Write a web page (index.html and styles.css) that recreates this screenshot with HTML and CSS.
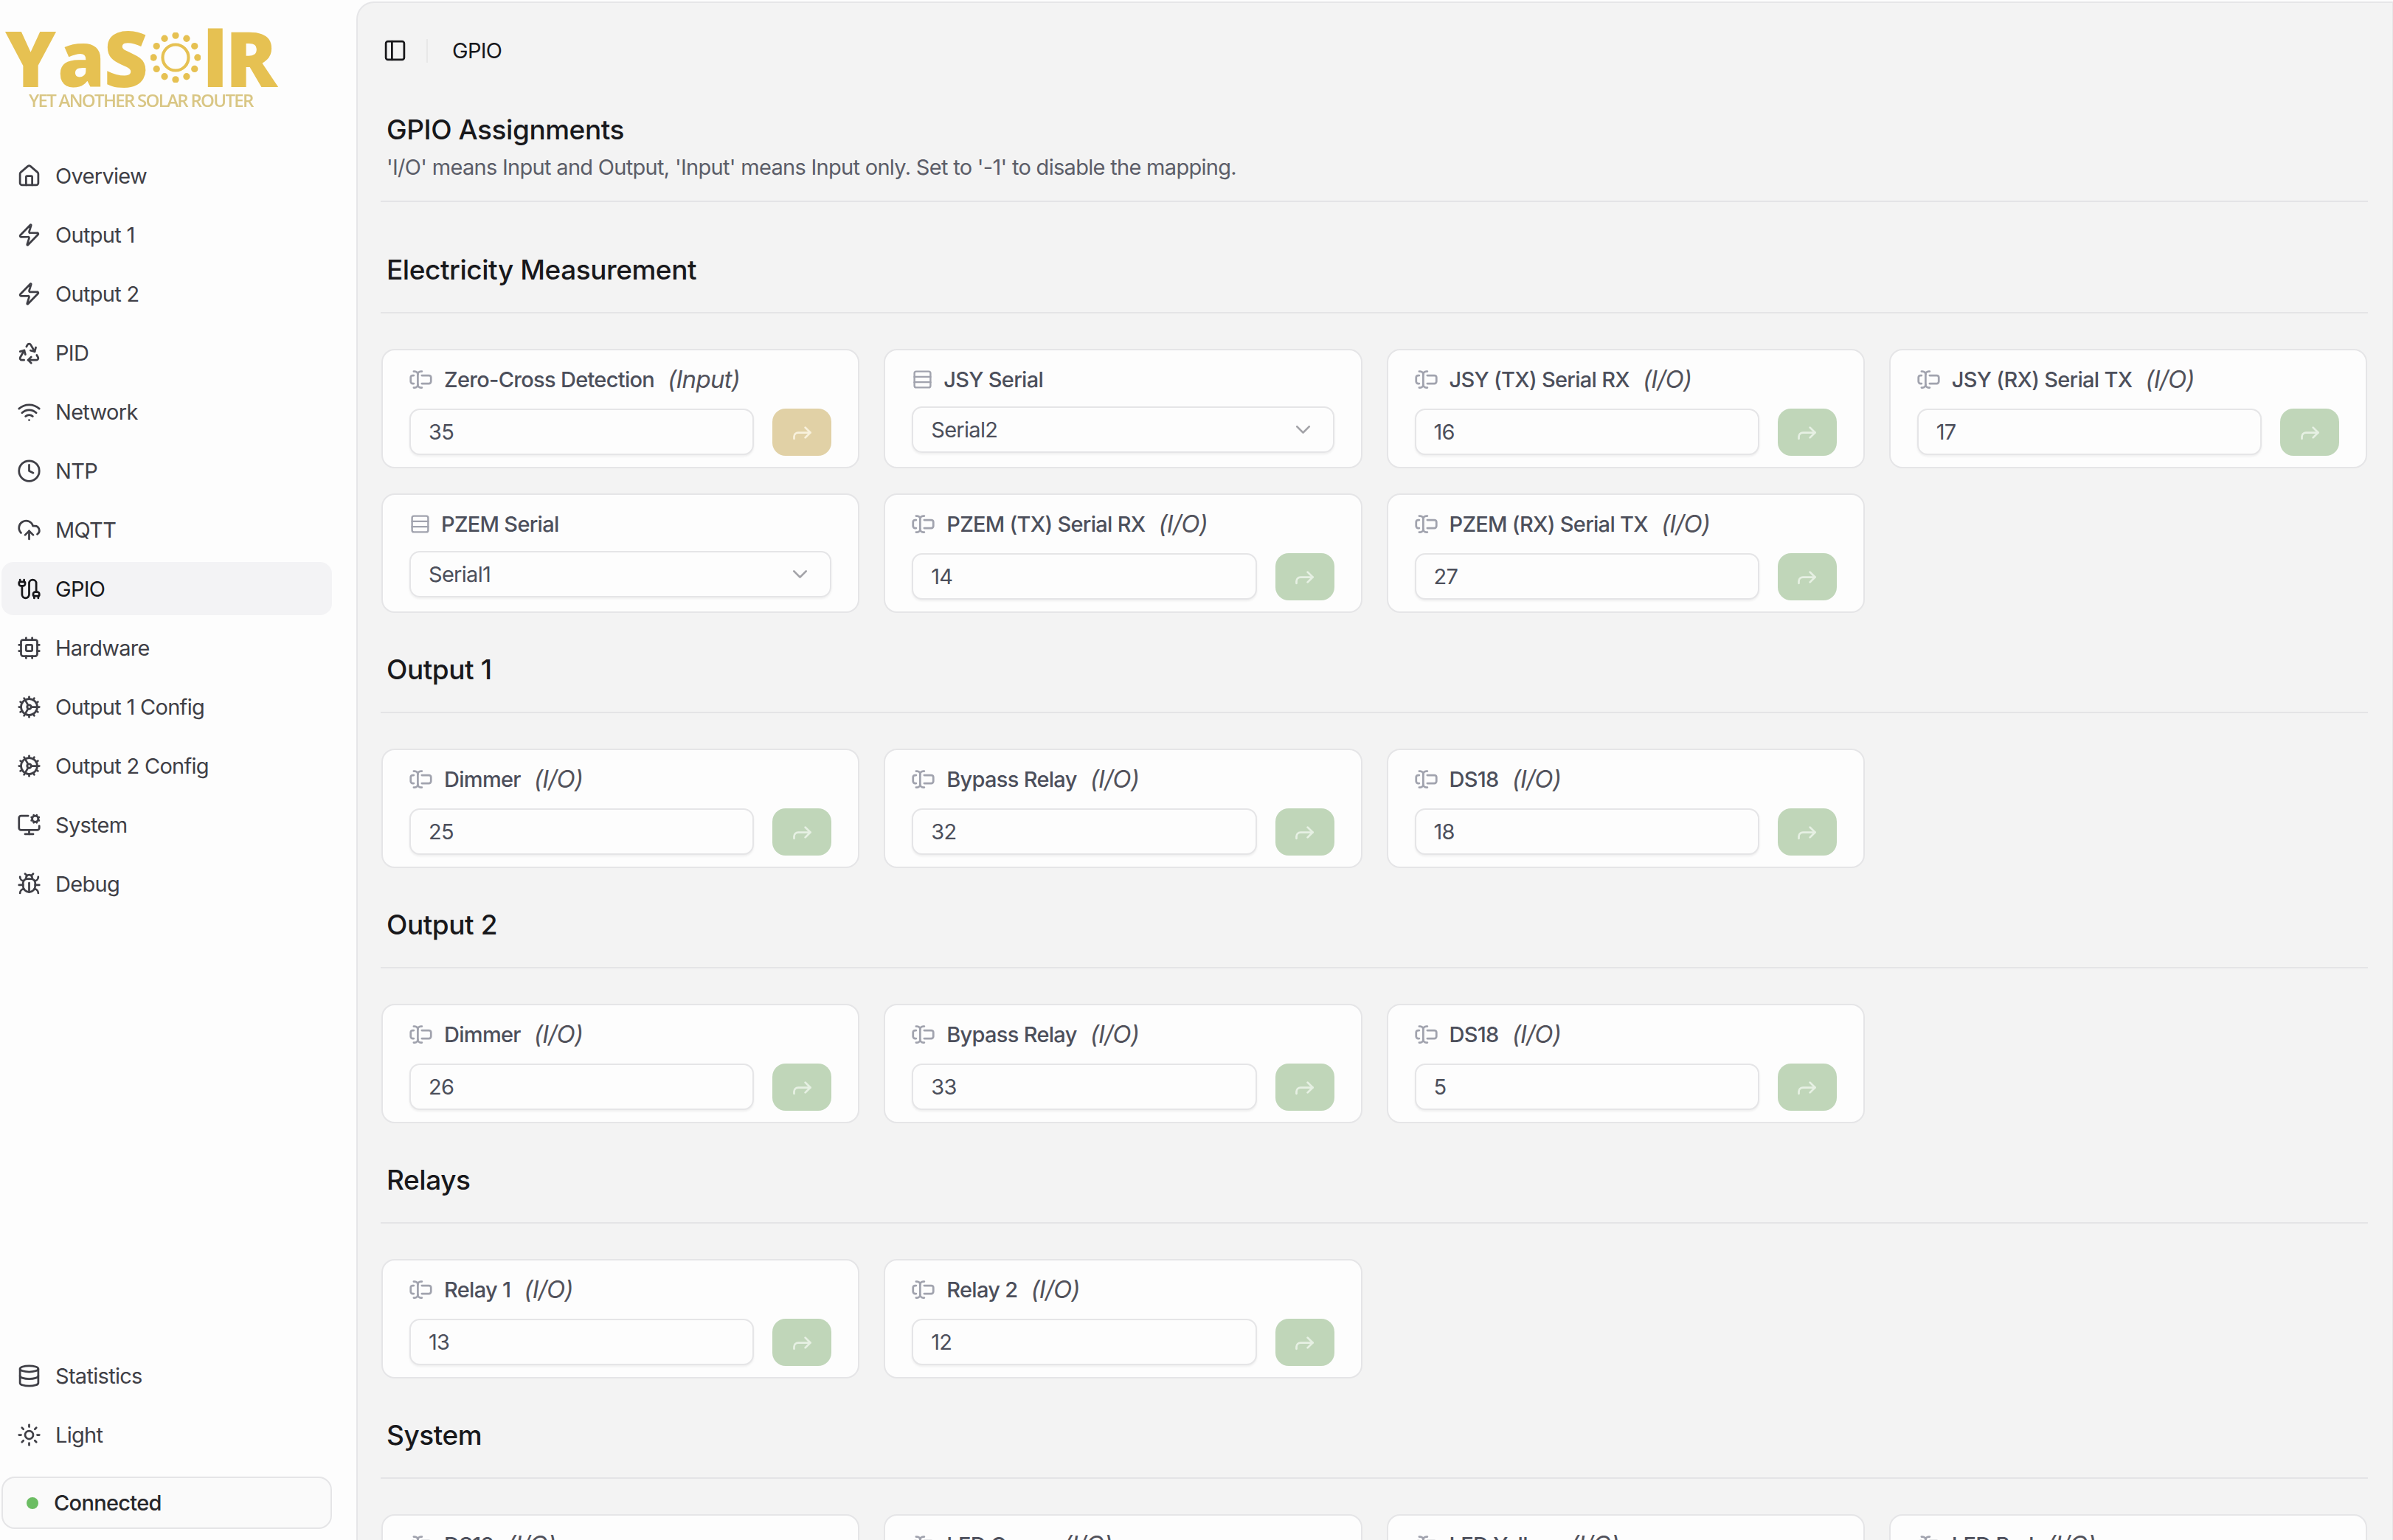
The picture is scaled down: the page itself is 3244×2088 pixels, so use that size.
FILE: index.html
```html
<!DOCTYPE html>
<html lang="en">
<head>
    <meta charset="UTF-8">
    <meta name="viewport" content="width=device-width, initial-scale=1.0">
    <title>YaSolR - GPIO</title>
    <link rel="stylesheet" href="styles.css">
</head>
<body>
    <!-- Icon sprite -->
    <svg class="sprite" xmlns="http://www.w3.org/2000/svg">
        <symbol id="i-house" viewBox="0 0 24 24"><path d="M15 21v-8a1 1 0 0 0-1-1h-4a1 1 0 0 0-1 1v8"/><path d="M3 10a2 2 0 0 1 .709-1.528l7-5.999a2 2 0 0 1 2.582 0l7 5.999A2 2 0 0 1 21 10v9a2 2 0 0 1-2 2H5a2 2 0 0 1-2-2z"/></symbol>
        <symbol id="i-zap" viewBox="0 0 24 24"><path d="M4 14a1 1 0 0 1-.78-1.63l9.9-10.2a.5.5 0 0 1 .86.46l-1.92 6.02A1 1 0 0 0 13 10h7a1 1 0 0 1 .78 1.63l-9.9 10.2a.5.5 0 0 1-.86-.46l1.92-6.02A1 1 0 0 0 11 14z"/></symbol>
        <symbol id="i-recycle" viewBox="0 0 24 24"><path d="M7 19H4.815a1.83 1.83 0 0 1-1.57-.881 1.785 1.785 0 0 1-.004-1.784L7.196 9.5"/><path d="M11 19h8.203a1.83 1.83 0 0 0 1.556-.89 1.784 1.784 0 0 0 0-1.775l-1.226-2.12"/><path d="m14 16-3 3 3 3"/><path d="M8.293 13.596 7.196 9.5 3.1 10.598"/><path d="m9.344 5.811 1.093-1.892A1.83 1.83 0 0 1 11.985 3a1.784 1.784 0 0 1 1.546.888l3.943 6.843"/><path d="m13.378 9.633 4.096 1.098 1.097-4.096"/></symbol>
        <symbol id="i-wifi" viewBox="0 0 24 24"><path d="M12 20h.01"/><path d="M2 8.82a15 15 0 0 1 20 0"/><path d="M5 12.859a10 10 0 0 1 14 0"/><path d="M8.5 16.429a5 5 0 0 1 7 0"/></symbol>
        <symbol id="i-clock" viewBox="0 0 24 24"><circle cx="12" cy="12" r="10"/><path d="M12 6v6l4 2"/></symbol>
        <symbol id="i-cloud" viewBox="0 0 24 24"><path d="M12 13v8"/><path d="M4 14.899A7 7 0 1 1 15.71 8h1.79a4.5 4.5 0 0 1 2.5 8.242"/><path d="m8 17 4-4 4 4"/></symbol>
        <symbol id="i-cable" viewBox="0 0 24 24"><path d="M17 21v-2a1 1 0 0 1-1-1v-1a2 2 0 0 1 2-2h2a2 2 0 0 1 2 2v1a1 1 0 0 1-1 1"/><path d="M19 15V6.5a3.5 3.5 0 0 0-7 0v11a3.5 3.5 0 0 1-7 0V9"/><path d="M21 21v-2h-4"/><path d="M3 5h4V3"/><path d="M7 5a1 1 0 0 1 1 1v1a2 2 0 0 1-2 2H4a2 2 0 0 1-2-2V6a1 1 0 0 1 1-1V3"/></symbol>
        <symbol id="i-cpu" viewBox="0 0 24 24"><rect width="16" height="16" x="4" y="4" rx="2"/><rect width="6" height="6" x="9" y="9" rx="1"/><path d="M15 2v2"/><path d="M15 20v2"/><path d="M2 15h2"/><path d="M2 9h2"/><path d="M20 15h2"/><path d="M20 9h2"/><path d="M9 2v2"/><path d="M9 20v2"/></symbol>
        <symbol id="i-cog" viewBox="0 0 24 24"><path d="M12 20a8 8 0 1 0 0-16 8 8 0 0 0 0 16Z"/><path d="M12 14a2 2 0 1 0 0-4 2 2 0 0 0 0 4Z"/><path d="M12 2v2"/><path d="M12 22v-2"/><path d="m17 20.66-1-1.73"/><path d="M11 10.27 7 3.34"/><path d="m20.66 17-1.73-1"/><path d="m3.34 7 1.73 1"/><path d="M14 12h8"/><path d="M2 12h2"/><path d="m20.66 7-1.73 1"/><path d="m3.34 17 1.73-1"/><path d="m17 3.34-1 1.73"/><path d="m11 13.73-4 6.93"/></symbol>
        <symbol id="i-monitor" viewBox="0 0 24 24"><path d="M12 17v4"/><path d="m14.305 7.53.923-.382"/><path d="m15.228 4.852-.923-.383"/><path d="m16.852 3.228-.383-.924"/><path d="m16.852 8.772-.383.923"/><path d="m19.148 3.228.383-.924"/><path d="m19.53 9.696-.382-.924"/><path d="m20.772 4.852.924-.383"/><path d="m20.772 7.148.924.383"/><path d="M22 13v2a2 2 0 0 1-2 2H4a2 2 0 0 1-2-2V5a2 2 0 0 1 2-2h7"/><path d="M8 21h8"/><circle cx="18" cy="6" r="3"/></symbol>
        <symbol id="i-bug" viewBox="0 0 24 24"><path d="m8 2 1.88 1.88"/><path d="M14.12 3.88 16 2"/><path d="M9 7.13v-1a3.003 3.003 0 1 1 6 0v1"/><path d="M12 20c-3.3 0-6-2.7-6-6v-3a4 4 0 0 1 4-4h4a4 4 0 0 1 4 4v3c0 3.3-2.7 6-6 6"/><path d="M12 20v-9"/><path d="M6.53 9C4.6 8.8 3 7.1 3 5"/><path d="M6 13H2"/><path d="M3 21c0-2.1 1.7-3.9 3.8-4"/><path d="M20.97 5c0 2.1-1.6 3.8-3.5 4"/><path d="M22 13h-4"/><path d="M17.2 17c2.1.1 3.8 1.9 3.8 4"/></symbol>
        <symbol id="i-database" viewBox="0 0 24 24"><ellipse cx="12" cy="5" rx="9" ry="3"/><path d="M3 5V19A9 3 0 0 0 21 19V5"/><path d="M3 12A9 3 0 0 0 21 12"/></symbol>
        <symbol id="i-sun" viewBox="0 0 24 24"><circle cx="12" cy="12" r="4"/><path d="M12 2v2"/><path d="M12 20v2"/><path d="m4.93 4.93 1.41 1.41"/><path d="m17.66 17.66 1.41 1.41"/><path d="M2 12h2"/><path d="M20 12h2"/><path d="m6.34 17.66-1.41 1.41"/><path d="m19.07 4.93-1.41 1.41"/></symbol>
        <symbol id="i-panel" viewBox="0 0 24 24"><rect width="18" height="18" x="3" y="3" rx="2"/><path d="M9 3v18"/></symbol>
        <symbol id="i-cursor" viewBox="0 0 24 24"><path d="M5 4h1a3 3 0 0 1 3 3 3 3 0 0 1 3-3h1"/><path d="M13 20h-1a3 3 0 0 1-3-3 3 3 0 0 1-3 3H5"/><path d="M5 16H4a2 2 0 0 1-2-2v-4a2 2 0 0 1 2-2h1"/><path d="M13 8h7a2 2 0 0 1 2 2v4a2 2 0 0 1-2 2h-7"/><path d="M9 7v10"/></symbol>
        <symbol id="i-rows" viewBox="0 0 24 24"><rect width="18" height="18" x="3" y="3" rx="2"/><path d="M21 9H3"/><path d="M21 15H3"/></symbol>
        <symbol id="i-forward" viewBox="0 0 24 24"><path d="m15 17 5-5-5-5"/><path d="M4 18v-2a4 4 0 0 1 4-4h12"/></symbol>
        <symbol id="i-chevron" viewBox="0 0 24 24"><path d="m6 9 6 6 6-6"/></symbol>
    </svg>

    <aside class="sidebar">
        <div class="logo">
            <div class="logo-word">
                <span class="logo-y">Y</span><span class="logo-as">aS</span>
                <svg class="logo-sun" viewBox="0 0 66 66">
                    <circle cx="33" cy="33" r="17" />
                    <g class="logo-rays">
                        <circle cx="33" cy="4" r="4.5"/><circle cx="47.5" cy="8" r="4.5"/><circle cx="58" cy="18" r="4.5"/><circle cx="62" cy="33" r="4.5"/><circle cx="58" cy="48" r="4.5"/><circle cx="47.5" cy="58" r="4.5"/><circle cx="33" cy="62" r="4.5"/><circle cx="18.5" cy="58" r="4.5"/><circle cx="8" cy="48" r="4.5"/><circle cx="4" cy="33" r="4.5"/><circle cx="8" cy="18" r="4.5"/><circle cx="18.5" cy="8" r="4.5"/>
                    </g>
                </svg>
                <span class="logo-lr">lR</span>
            </div>
            <div class="logo-tag">YET ANOTHER SOLAR ROUTER</div>
        </div>

        <nav class="nav">
            <a class="nav-item"><svg class="icon"><use href="#i-house"/></svg>Overview</a>
            <a class="nav-item"><svg class="icon"><use href="#i-zap"/></svg>Output 1</a>
            <a class="nav-item"><svg class="icon"><use href="#i-zap"/></svg>Output 2</a>
            <a class="nav-item"><svg class="icon"><use href="#i-recycle"/></svg>PID</a>
            <a class="nav-item"><svg class="icon"><use href="#i-wifi"/></svg>Network</a>
            <a class="nav-item"><svg class="icon"><use href="#i-clock"/></svg>NTP</a>
            <a class="nav-item"><svg class="icon"><use href="#i-cloud"/></svg>MQTT</a>
            <a class="nav-item active"><svg class="icon"><use href="#i-cable"/></svg>GPIO</a>
            <a class="nav-item"><svg class="icon"><use href="#i-cpu"/></svg>Hardware</a>
            <a class="nav-item"><svg class="icon"><use href="#i-cog"/></svg>Output 1 Config</a>
            <a class="nav-item"><svg class="icon"><use href="#i-cog"/></svg>Output 2 Config</a>
            <a class="nav-item"><svg class="icon"><use href="#i-monitor"/></svg>System</a>
            <a class="nav-item"><svg class="icon"><use href="#i-bug"/></svg>Debug</a>
        </nav>

        <nav class="nav nav-bottom">
            <a class="nav-item"><svg class="icon"><use href="#i-database"/></svg>Statistics</a>
            <a class="nav-item"><svg class="icon"><use href="#i-sun"/></svg>Light</a>
        </nav>

        <div class="status"><span class="status-dot"></span>Connected</div>
    </aside>

    <main class="main">
        <header class="topbar">
            <svg class="icon"><use href="#i-panel"/></svg>
            <span class="topbar-sep"></span>
            <span class="topbar-title">GPIO</span>
        </header>

        <div class="intro">
            <h1>GPIO Assignments</h1>
            <p>'I/O' means Input and Output, 'Input' means Input only. Set to '-1' to disable the mapping.</p>
        </div>

        <section class="section">
            <h2>Electricity Measurement</h2>
            <div class="grid">
                <div class="card">
                    <div class="card-label"><svg class="card-icon"><use href="#i-cursor"/></svg>Zero-Cross Detection<em>(Input)</em></div>
                    <div class="field"><input class="input" value="35"><button class="send send-input"><svg class="icon"><use href="#i-forward"/></svg></button></div>
                </div>
                <div class="card">
                    <div class="card-label card-label-select"><svg class="card-icon-rows"><use href="#i-rows"/></svg>JSY Serial</div>
                    <div class="select">Serial2<svg class="icon chevron"><use href="#i-chevron"/></svg></div>
                </div>
                <div class="card">
                    <div class="card-label"><svg class="card-icon"><use href="#i-cursor"/></svg>JSY (TX) Serial RX<em>(I/O)</em></div>
                    <div class="field"><input class="input" value="16"><button class="send"><svg class="icon"><use href="#i-forward"/></svg></button></div>
                </div>
                <div class="card">
                    <div class="card-label"><svg class="card-icon"><use href="#i-cursor"/></svg>JSY (RX) Serial TX<em>(I/O)</em></div>
                    <div class="field"><input class="input" value="17"><button class="send"><svg class="icon"><use href="#i-forward"/></svg></button></div>
                </div>
                <div class="card">
                    <div class="card-label card-label-select"><svg class="card-icon-rows"><use href="#i-rows"/></svg>PZEM Serial</div>
                    <div class="select">Serial1<svg class="icon chevron"><use href="#i-chevron"/></svg></div>
                </div>
                <div class="card">
                    <div class="card-label"><svg class="card-icon"><use href="#i-cursor"/></svg>PZEM (TX) Serial RX<em>(I/O)</em></div>
                    <div class="field"><input class="input" value="14"><button class="send"><svg class="icon"><use href="#i-forward"/></svg></button></div>
                </div>
                <div class="card">
                    <div class="card-label"><svg class="card-icon"><use href="#i-cursor"/></svg>PZEM (RX) Serial TX<em>(I/O)</em></div>
                    <div class="field"><input class="input" value="27"><button class="send"><svg class="icon"><use href="#i-forward"/></svg></button></div>
                </div>
            </div>
        </section>

        <section class="section">
            <h2>Output 1</h2>
            <div class="grid">
                <div class="card">
                    <div class="card-label"><svg class="card-icon"><use href="#i-cursor"/></svg>Dimmer<em>(I/O)</em></div>
                    <div class="field"><input class="input" value="25"><button class="send"><svg class="icon"><use href="#i-forward"/></svg></button></div>
                </div>
                <div class="card">
                    <div class="card-label"><svg class="card-icon"><use href="#i-cursor"/></svg>Bypass Relay<em>(I/O)</em></div>
                    <div class="field"><input class="input" value="32"><button class="send"><svg class="icon"><use href="#i-forward"/></svg></button></div>
                </div>
                <div class="card">
                    <div class="card-label"><svg class="card-icon"><use href="#i-cursor"/></svg>DS18<em>(I/O)</em></div>
                    <div class="field"><input class="input" value="18"><button class="send"><svg class="icon"><use href="#i-forward"/></svg></button></div>
                </div>
            </div>
        </section>

        <section class="section">
            <h2>Output 2</h2>
            <div class="grid">
                <div class="card">
                    <div class="card-label"><svg class="card-icon"><use href="#i-cursor"/></svg>Dimmer<em>(I/O)</em></div>
                    <div class="field"><input class="input" value="26"><button class="send"><svg class="icon"><use href="#i-forward"/></svg></button></div>
                </div>
                <div class="card">
                    <div class="card-label"><svg class="card-icon"><use href="#i-cursor"/></svg>Bypass Relay<em>(I/O)</em></div>
                    <div class="field"><input class="input" value="33"><button class="send"><svg class="icon"><use href="#i-forward"/></svg></button></div>
                </div>
                <div class="card">
                    <div class="card-label"><svg class="card-icon"><use href="#i-cursor"/></svg>DS18<em>(I/O)</em></div>
                    <div class="field"><input class="input" value="5"><button class="send"><svg class="icon"><use href="#i-forward"/></svg></button></div>
                </div>
            </div>
        </section>

        <section class="section">
            <h2>Relays</h2>
            <div class="grid">
                <div class="card">
                    <div class="card-label"><svg class="card-icon"><use href="#i-cursor"/></svg>Relay 1<em>(I/O)</em></div>
                    <div class="field"><input class="input" value="13"><button class="send"><svg class="icon"><use href="#i-forward"/></svg></button></div>
                </div>
                <div class="card">
                    <div class="card-label"><svg class="card-icon"><use href="#i-cursor"/></svg>Relay 2<em>(I/O)</em></div>
                    <div class="field"><input class="input" value="12"><button class="send"><svg class="icon"><use href="#i-forward"/></svg></button></div>
                </div>
            </div>
        </section>

        <section class="section">
            <h2>System</h2>
            <div class="grid">
                <div class="card">
                    <div class="card-label"><svg class="card-icon"><use href="#i-cursor"/></svg>DS18<em>(I/O)</em></div>
                </div>
                <div class="card">
                    <div class="card-label"><svg class="card-icon"><use href="#i-cursor"/></svg>LED Green<em>(I/O)</em></div>
                </div>
                <div class="card">
                    <div class="card-label"><svg class="card-icon"><use href="#i-cursor"/></svg>LED Yellow<em>(I/O)</em></div>
                </div>
                <div class="card">
                    <div class="card-label"><svg class="card-icon"><use href="#i-cursor"/></svg>LED Red<em>(I/O)</em></div>
                </div>
            </div>
        </section>
    </main>
</body>
</html>
```

FILE: styles.css
```css
* {
    box-sizing: border-box;
}
html, body {
    height: 100%;
}
body {
    margin: 0;
    display: flex;
    overflow: hidden;
    background-color: #fdfdfd;
    color: #18181b;
    font-family: 'Inter', sans-serif;
    font-size: 29px;
    letter-spacing: -0.7px;
}
.sprite {
    display: none;
}
.icon {
    width: 33px;
    height: 33px;
    flex-shrink: 0;
    fill: none;
    stroke: currentColor;
    stroke-width: 2;
    stroke-linecap: round;
    stroke-linejoin: round;
}

/* Sidebar */
.sidebar {
    width: 483px;
    flex-shrink: 0;
    height: 100%;
    display: flex;
    flex-direction: column;
    padding: 0 33px 15px 2px;
}
.logo {
    height: 202px;
    padding-top: 35px;
    color: #e6c152;
    filter: blur(0.6px);
}
.logo-word {
    display: flex;
    align-items: center;
    height: 86px;
    padding-left: 5px;
    font-family: 'Open Sans', sans-serif;
    font-weight: 800;
    font-size: 104px;
    line-height: 86px;
    letter-spacing: 0;
}
.logo-y {
    margin-right: 2px;
}
.logo-as {
    letter-spacing: -2px;
}
.logo-sun {
    width: 68px;
    height: 68px;
    margin: 0 3px 0 5px;
    fill: none;
    stroke: #e6c152;
    stroke-width: 4;
}
.logo-rays circle {
    fill: #e6c152;
    stroke: none;
}
.logo-lr {
    letter-spacing: -3px;
}
.logo-tag {
    margin-top: 2px;
    padding-left: 37px;
    color: #d9c684;
    font-family: 'Open Sans', sans-serif;
    font-weight: 600;
    font-size: 24px;
    line-height: 26px;
    letter-spacing: -1.7px;
    white-space: nowrap;
}
.nav {
    display: flex;
    flex-direction: column;
    gap: 8px;
}
.nav-bottom {
    margin-top: auto;
}
.nav-item {
    display: flex;
    align-items: center;
    gap: 19px;
    height: 72px;
    padding-left: 21px;
    border-radius: 16px;
    color: #3f3f46;
}
.nav-item.active {
    background-color: #f3f3f5;
    color: #18181b;
}
.status {
    display: flex;
    align-items: center;
    gap: 21px;
    height: 71px;
    margin-top: 21px;
    padding-left: 32px;
    border: 2px solid #e5e5e7;
    border-radius: 18px;
    background-color: #fafafa;
    color: #27272a;
    font-weight: 500;
}
.status-dot {
    width: 16px;
    height: 16px;
    border-radius: 50%;
    background-color: #6cbd63;
}

/* Main panel */
.main {
    flex: 1;
    min-width: 0;
    height: calc(100% - 2px);
    margin-top: 2px;
    padding: 0 33px 0 31px;
    overflow: hidden;
    background-color: #f3f3f3;
    border-left: 2px solid #e6e6e8;
    border-top: 2px solid #e6e6e8;
    border-right: 1px solid #e6e6e8;
    border-top-left-radius: 24px;
}
.topbar {
    display: flex;
    align-items: center;
    height: 129px;
    padding-left: 3px;
}
.topbar-sep {
    width: 2px;
    height: 32px;
    margin: 0 33px 0 26px;
    background-color: #e8e8e8;
}
.intro {
    padding: 20px 8px 25px;
    border-bottom: 2px solid #e4e4e6;
}
.intro h1 {
    margin: 0 0 8px;
    font-size: 37px;
    line-height: 46px;
    font-weight: 500;
    letter-spacing: -0.45px;
}
.intro p {
    margin: 0;
    line-height: 40px;
    color: #5b5d68;
}
.section h2 {
    margin: 0;
    padding: 0 8px 32px;
    border-bottom: 2px solid #e4e4e6;
    font-size: 37px;
    line-height: 50px;
    font-weight: 500;
    letter-spacing: -0.45px;
}
.section {
    margin-top: 52px;
}
.intro + .section {
    margin-top: 67px;
}
.grid {
    display: grid;
    grid-template-columns: repeat(4, minmax(0, 1fr));
    gap: 34px 33px;
    margin-top: 48px;
    padding: 0 1px;
}

/* Cards */
.card {
    height: 162px;
    padding: 24px 36px 0;
    background-color: #fdfdfd;
    border: 2px solid #e5e5e7;
    border-radius: 18px;
}
.card-label {
    display: flex;
    align-items: center;
    gap: 16px;
    height: 30px;
    margin-bottom: 25px;
    color: #4c4f5b;
    font-weight: 500;
    white-space: nowrap;
}
.card-label-select {
    margin-bottom: 22px;
}
.card-label em {
    margin-left: 2px;
    font-size: 33px;
    font-weight: 400;
    color: #52525b;
}
.card-icon {
    width: 33px;
    height: 33px;
    margin-left: -1px;
    margin-right: -1px;
    fill: none;
    stroke: #a1a3ae;
    stroke-width: 2;
    stroke-linecap: round;
    stroke-linejoin: round;
}
.card-icon-rows {
    width: 29px;
    height: 29px;
    margin-right: -2px;
    fill: none;
    stroke: #a1a3ae;
    stroke-width: 2;
    stroke-linecap: round;
    stroke-linejoin: round;
}
.field {
    display: flex;
    gap: 25px;
}
.input {
    flex: 1;
    min-width: 0;
    height: 63px;
    padding: 0 0 0 24px;
    border: 2px solid #e5e5e7;
    border-radius: 14px;
    box-shadow: 0 2px 3px rgba(0, 0, 0, 0.06);
    background-color: #fdfdfd;
    color: #4c4f5b;
    font-family: inherit;
    font-size: 29px;
    letter-spacing: -0.7px;
}
.select {
    display: flex;
    align-items: center;
    justify-content: space-between;
    height: 63px;
    padding: 0 24px 0 24px;
    border: 2px solid #e5e5e7;
    border-radius: 14px;
    box-shadow: 0 2px 3px rgba(0, 0, 0, 0.06);
    color: #4c4f5b;
}
.chevron {
    color: #a3a3a8;
}
.send {
    display: flex;
    align-items: center;
    justify-content: center;
    width: 80px;
    height: 64px;
    padding: 0;
    border: 0;
    border-radius: 18px;
    background-color: #c0d6b9;
    color: #e6f0e3;
}
.send-input {
    background-color: #e1d1a6;
    color: #f8f1dc;
}
```
